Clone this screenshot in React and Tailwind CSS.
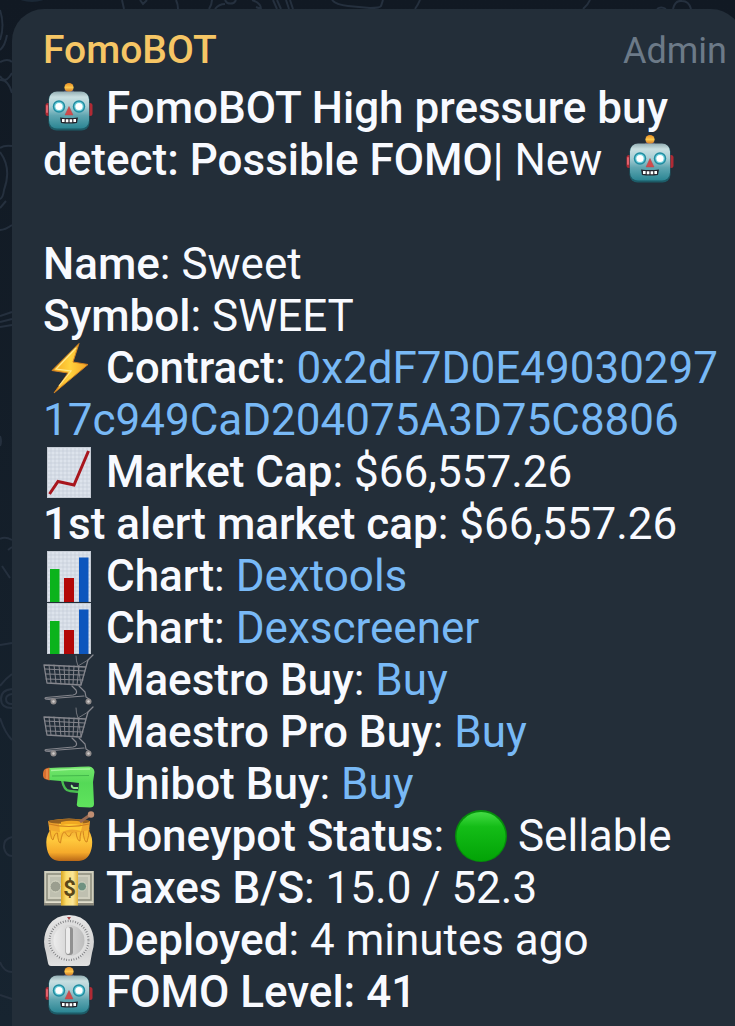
const CONTRACT = "0x2dF7D0E4903029717c949CaD204075A3D75C8806";

function Emoji({ label, children }) {
  return (
    <svg
      role="img"
      aria-label={label}
      viewBox="0 0 52 52"
      className="inline-block size-[52px] align-top"
    >
      {children}
    </svg>
  );
}

function Robot() {
  return (
    <Emoji label="robot">
      <ellipse cx="26" cy="10" rx="5" ry="2.5" fill="#4d4a73" />
      <circle cx="26" cy="5.5" r="4.6" fill="url(#antenna)" />
      <rect x="2.5" y="21" width="6" height="13" rx="2.5" fill="#b02a34" />
      <rect x="43.5" y="21" width="6" height="13" rx="2.5" fill="#b02a34" />
      <rect x="3" y="23" width="2" height="8" rx="1" fill="#e5606a" />
      <rect x="5.5" y="10" width="41" height="38.5" rx="8" fill="#1d5c68" />
      <rect x="6" y="9.5" width="40" height="37" rx="8" fill="url(#robotHead)" />
      <circle cx="16" cy="24.5" r="6.2" fill="#1f8ca0" />
      <circle cx="16" cy="24.5" r="4.8" fill="#6fcedb" />
      <circle cx="16" cy="24.5" r="3.6" fill="#fff" />
      <circle cx="36" cy="24.5" r="6.2" fill="#1f8ca0" />
      <circle cx="36" cy="24.5" r="4.8" fill="#6fcedb" />
      <circle cx="36" cy="24.5" r="3.6" fill="#fff" />
      <path d="M26 24.5L30 33H22Z" fill="#d14a4b" stroke="#b5474b" strokeWidth=".5" />
      <path d="M17 35.5Q26 36.5 35 35.5L34 41Q26 42 18 41Z" fill="#25262e" />
      <path d="M19 37h2.6v3H19zM22.8 37.3h2.6v3h-2.6zM26.6 37.3h2.6v3h-2.6zM30.4 37H33v3h-2.6z" fill="#fff" />
    </Emoji>
  );
}

function Bolt() {
  return (
    <Emoji label="high voltage">
      <path
        d="M36 1.5L9 28.5L25 31L11 51L45 22.5L30 20Z"
        fill="url(#bolt)"
        stroke="#cf7f22"
        strokeWidth="1"
        strokeLinejoin="round"
      />
      <path d="M33 6L13 27L28 29L16 44" fill="none" stroke="#ffe98c" strokeWidth="1.2" />
    </Emoji>
  );
}

function Paper() {
  return (
    <>
      <rect x="4" y="1" width="44" height="51" fill="#dde3ec" />
      <path
        d="M8 1v51M12 1v51M16 1v51M20 1v51M24 1v51M28 1v51M32 1v51M36 1v51M40 1v51M44 1v51M4 5h44M4 9h44M4 13h44M4 17h44M4 21h44M4 25h44M4 29h44M4 33h44M4 37h44M4 41h44M4 45h44M4 49h44"
        stroke="#c3ccd8"
        strokeWidth=".7"
      />
      <rect x="4.5" y="1.5" width="43" height="50" fill="none" stroke="#c5cbd4" />
    </>
  );
}

function ChartUp() {
  return (
    <Emoji label="chart increasing">
      <Paper />
      <path d="M6.5 48L15 35.5L31 39L45.5 5" fill="none" stroke="#a8161d" strokeWidth="3" />
    </Emoji>
  );
}

function BarChart() {
  return (
    <Emoji label="bar chart">
      <Paper />
      <rect x="7" y="19" width="9.5" height="33" fill="#0bb31c" />
      <rect x="21" y="28" width="10" height="24" fill="#b30808" />
      <rect x="36" y="7.5" width="9.5" height="44.5" fill="#0d56bd" />
    </Emoji>
  );
}

function Cart() {
  return (
    <Emoji label="shopping cart">
      <g fill="none" stroke="#85868d" strokeLinecap="round" strokeLinejoin="round">
        <path d="M50 1L45 6L38 31L4 29L1 11L43 13" strokeWidth="1.3" />
        <path
          d="M6 11L8 29M11 11L13 29M16 12L18 30M21 12L22 30M26 12V30M31 12L30 30M36 13L34 31M2 15L42 17M3 20L41 21M3 25L40 26"
          strokeWidth="1"
        />
        <path d="M33 2Q33 7 35 12L38 31M35 12L45 6" strokeWidth=".8" />
        <path d="M29 32L33 36Q35 40 30 41L3 43.5Q1 44 3 45L9 46" strokeWidth="1.2" />
        <path d="M36 32L42 38L43 43L46 45M3 45L41 42" strokeWidth="1.2" />
      </g>
      <circle cx="10.5" cy="47.5" r="3" fill="#8f8b8b" />
      <circle cx="10.5" cy="47.5" r="1.2" fill="#d0cccb" />
      <circle cx="45.5" cy="47.5" r="3" fill="#8f8b8b" />
      <circle cx="45.5" cy="47.5" r="1.2" fill="#d0cccb" />
    </Emoji>
  );
}

function WaterGun() {
  return (
    <Emoji label="water pistol">
      <path d="M19 22Q21 33 27 33L36 34" fill="none" stroke="#49bd50" strokeWidth="2.4" />
      <path d="M29 27Q28 29 31 30H35" fill="none" stroke="#8ff08c" strokeWidth="2" />
      <path
        d="M6 10Q28 9 46 8.5Q51 9 51.5 14L50 24L51 46Q51 49.5 47 49.5L36 49Q33 48 34 45L36 25Q20 23 6 22Z"
        fill="url(#gun)"
      />
      <path d="M8 12.5Q28 11 47 11" fill="none" stroke="#a4f69b" strokeWidth="1.5" />
      <path d="M9 18L46 17.5" fill="none" stroke="#43b84b" strokeWidth="1" />
      <path d="M6.5 9.5V22.5L2 21Q-.5 20 0 15.5Q.3 11.5 3 10.5Z" fill="#d9702f" />
      <path d="M4 11V21" stroke="#f39a55" strokeWidth="1.2" />
    </Emoji>
  );
}

function HoneyPot() {
  return (
    <Emoji label="honey pot">
      <path
        d="M5 11Q26 6 47 11L46 21Q50 27 49 36Q47 50 36 51H16Q5 50 3.5 36Q2.5 27 6.5 21Z"
        fill="url(#honey)"
      />
      <path
        d="M7 19Q8 30 10 30Q12 22 14.5 23Q15 33 17.5 33Q19 21 22 22Q25 28 27 26Q29 20 33 22Q34 31 37 31Q37 20 40 20Q41 33 44 32Q46 26 46 19"
        fill="#f9bb31"
        stroke="#cf7f1c"
        strokeWidth=".9"
      />
      <path d="M6 13Q26 18 46 13V20Q26 25 6 20Z" fill="#efa72e" />
      <path d="M16 13Q27 10 40 13L38 21Q27 17 17 23Z" fill="#ffca33" />
      <ellipse cx="26" cy="11.5" rx="20.5" ry="2.6" fill="#94601f" />
      <path d="M18 12Q28 9.5 40 12L38 15Q28 13 18 15Z" fill="#f0a722" />
      <path d="M6 14Q26 19 46 14" fill="none" stroke="#d07f20" strokeWidth="1.2" />
      <path d="M37 12L47 5" stroke="#9a6a51" strokeWidth="3" />
      <circle cx="48" cy="4.5" r="3.2" fill="#c08e72" />
    </Emoji>
  );
}

function Money() {
  return (
    <Emoji label="dollar banknote">
      <rect x="1" y="9" width="50" height="34.5" fill="#8b897c" />
      <rect x="1.5" y="9" width="49" height="32" fill="#d0cfbe" />
      <rect x="4" y="12" width="44" height="26" fill="none" stroke="#8f8f80" strokeWidth="1.6" />
      <rect x="7" y="15" width="38" height="20" fill="#bfc0b0" />
      <circle cx="12.5" cy="24.5" r="5.5" fill="#9b9e8f" stroke="#d9d9c6" />
      <circle cx="39" cy="24.5" r="4.5" fill="#6f9281" stroke="#d9d9c6" />
      <path d="M3 40.5H50" stroke="#e4e0cd" strokeWidth="1" />
      <rect x="18" y="9" width="17" height="34.5" fill="url(#band)" />
      <text
        x="26.5"
        y="34"
        textAnchor="middle"
        fontFamily="Roboto, sans-serif"
        fontSize="22"
        fontWeight="700"
        fill="#5b4719"
      >
        $
      </text>
    </Emoji>
  );
}

function Timer() {
  return (
    <Emoji label="timer clock">
      <path
        d="M26 1Q39 1 46 11Q54 24 49 39L47 50Q46.5 52 44 52H8Q5.5 52 5 49L3 39Q-2 24 6 11Q13 1 26 1Z"
        fill="url(#timer)"
      />
      <circle cx="26" cy="26.5" r="21" fill="#dedede" />
      <circle
        cx="26"
        cy="26.5"
        r="19.5"
        fill="none"
        stroke="#77787b"
        strokeWidth="2.2"
        strokeDasharray=".8 1.7"
      />
      <circle cx="26" cy="26.5" r="15.5" fill="url(#dial)" />
      <rect x="22.5" y="13" width="7.5" height="28" rx="3" fill="#909090" />
      <rect x="23" y="13" width="4" height="27" rx="2" fill="#ececec" />
      <path d="M24 3H28L26 6Z" fill="#a84545" />
    </Emoji>
  );
}

function GreenCircle() {
  return (
    <Emoji label="green circle">
      <circle cx="26" cy="26" r="26" fill="#058d0b" />
      <circle cx="26" cy="26.5" r="24.5" fill="url(#greenBall)" />
    </Emoji>
  );
}

// Gradients shared by all the emoji
function Gradients() {
  return (
    <svg className="absolute size-0" aria-hidden="true">
      <defs>
        <linearGradient id="robotHead" x2="0" y2="1">
          <stop offset="0" stopColor="#93aeb3" />
          <stop offset=".15" stopColor="#c9dfe1" />
          <stop offset=".4" stopColor="#a8ced4" />
          <stop offset=".65" stopColor="#5fa6b1" />
          <stop offset="1" stopColor="#2b8593" />
        </linearGradient>
        <linearGradient id="antenna" x2="0" y2="1">
          <stop offset="0" stopColor="#e58a23" />
          <stop offset=".5" stopColor="#ffc84a" />
          <stop offset="1" stopColor="#c26a22" />
        </linearGradient>
        <linearGradient id="bolt" x2="1" y2="0">
          <stop offset="0" stopColor="#f5a720" />
          <stop offset=".5" stopColor="#ffd23d" />
          <stop offset="1" stopColor="#f3a326" />
        </linearGradient>
        <linearGradient id="gun" x2="0" y2="1">
          <stop offset="0" stopColor="#74e66d" />
          <stop offset=".4" stopColor="#55d957" />
          <stop offset="1" stopColor="#5fe35d" />
        </linearGradient>
        <linearGradient id="honey" x2="0" y2="1">
          <stop offset="0" stopColor="#e0902a" />
          <stop offset=".5" stopColor="#ffc93d" />
          <stop offset=".8" stopColor="#f5aa2b" />
          <stop offset="1" stopColor="#b96817" />
        </linearGradient>
        <linearGradient id="band">
          <stop offset="0" stopColor="#d9a520" />
          <stop offset=".3" stopColor="#fbdc6c" />
          <stop offset=".7" stopColor="#fbe69a" />
          <stop offset="1" stopColor="#e0b036" />
        </linearGradient>
        <linearGradient id="timer" x2="0" y2="1">
          <stop offset="0" stopColor="#e6e6e6" />
          <stop offset=".7" stopColor="#d2d2d2" />
          <stop offset="1" stopColor="#e2e2e2" />
        </linearGradient>
        <linearGradient id="dial">
          <stop offset="0" stopColor="#ececec" />
          <stop offset="1" stopColor="#bdbdbd" />
        </linearGradient>
        <linearGradient id="greenBall" x2="0" y2="1">
          <stop offset="0" stopColor="#44dc45" />
          <stop offset=".3" stopColor="#14bd17" />
          <stop offset="1" stopColor="#02a306" />
        </linearGradient>
      </defs>
    </svg>
  );
}

// Chat wallpaper, only visible around the bubble
function Wallpaper() {
  return (
    <svg
      viewBox="0 0 735 1026"
      preserveAspectRatio="xMinYMin slice"
      className="absolute inset-0 size-full"
      fill="none"
      stroke="#25303e"
      strokeWidth="2"
      aria-hidden="true"
    >
      <ellipse cx="32" cy="-3" rx="14" ry="5" fill="#1b2836" stroke="none" />
      <path d="M122 0L124 9M178 9Q178 4 176 0M140 0L143 4L147 0" />
      <path d="M209 9Q212 4 212 0M215 9Q219 4 225 4M225 0A6 6 0 0 0 236 0M252 0Q261 3 261 9M256 7L261 9" />
      <path d="M273 0L277 9M277 0L281 9M286 0L289 9M290 0L293 9" />
      <path d="M332 0Q336 5 348 6L370 8Q380 8 381 6L383 0M420 0Q418 5 415 9" />
      <path d="M590 0Q588 5 583 9M657 9Q661 6 666 9M673 9Q675 0 682 1Q689 1 691 9" />
      <path d="M0 10Q5 25 0 40M7 35Q5 46 0 50M0 62Q8 58 12 62M12 73Q5 85 0 76M0 80Q8 79 12 93" />
      <path d="M12 146Q4 145 0 148M0 152Q12 168 4 190Q3 198 0 199M6 201L0 208M0 230Q5 230 12 225" />
      <path d="M0 316L12 312M0 322L12 319M0 327L12 325M0 436Q2 441 0 446M0 539Q5 536 12 540M8 550L12 547M2 566L10 578" />
      <path d="M0 645L12 643M0 686Q5 679 12 674M12 689Q1 690 1 699Q1 708 12 708M12 694Q6 695 6 699Q6 704 12 704M0 718Q5 733 12 740" />
      <path d="M12 837Q3 839 4 848Q6 856 12 856M0 962Q4 972 12 972M0 995L12 999" />
    </svg>
  );
}

function Row({ icon, label, children }) {
  return (
    <div>
      {icon}
      {icon && " "}
      <b className="font-medium">{label}</b>: {children}
    </div>
  );
}

function Link({ children }) {
  return (
    <a href="#" className="break-all text-[#78b9f6]">
      {children}
    </a>
  );
}

function App() {
  return (
    <div className="relative flex min-h-screen flex-col overflow-hidden bg-linear-to-b from-[#111923] to-[#172430] pt-[9px] font-[Roboto,sans-serif]">
      <Wallpaper />
      <Gradients />

      <article className="relative ml-3 -mr-2 flex-1 rounded-t-[32px] bg-[#232e39] pt-4 pr-4 pb-2 pl-[31px]">
        <header className="flex items-baseline justify-between leading-[50px]">
          <h1 className="text-[39px] font-medium text-[#f6c665]">FomoBOT</h1>
          <span className="text-[36px] text-[#6c7a88]">Admin</span>
        </header>

        <div className="mt-[6px] text-[44px] leading-[52px] text-[#f8faff]">
          <p className="mb-[52px]">
            <Robot />{" "}
            <b className="font-medium">
              FomoBOT High pressure buy detect: Possible FOMO
            </b>
            | New&nbsp; <Robot />
          </p>

          <Row label="Name">Sweet</Row>
          <Row label="Symbol">SWEET</Row>
          <Row icon={<Bolt />} label="Contract">
            <Link>{CONTRACT}</Link>
          </Row>
          <Row icon={<ChartUp />} label="Market Cap">
            $66,557.26
          </Row>
          <Row label="1st alert market cap">$66,557.26</Row>
          <Row icon={<BarChart />} label="Chart">
            <Link>Dextools</Link>
          </Row>
          <Row icon={<BarChart />} label="Chart">
            <Link>Dexscreener</Link>
          </Row>
          <Row icon={<Cart />} label="Maestro Buy">
            <Link>Buy</Link>
          </Row>
          <Row icon={<Cart />} label="Maestro Pro Buy">
            <Link>Buy</Link>
          </Row>
          <Row icon={<WaterGun />} label="Unibot Buy">
            <Link>Buy</Link>
          </Row>
          <Row icon={<HoneyPot />} label="Honeypot Status">
            <GreenCircle /> Sellable
          </Row>
          <Row icon={<Money />} label="Taxes B/S">
            15.0 / 52.3
          </Row>
          <Row icon={<Timer />} label="Deployed">
            4 minutes ago
          </Row>
          <div className="font-medium">
            <Robot /> FOMO Level: 41
          </div>
        </div>
      </article>
    </div>
  );
}

export default App;
